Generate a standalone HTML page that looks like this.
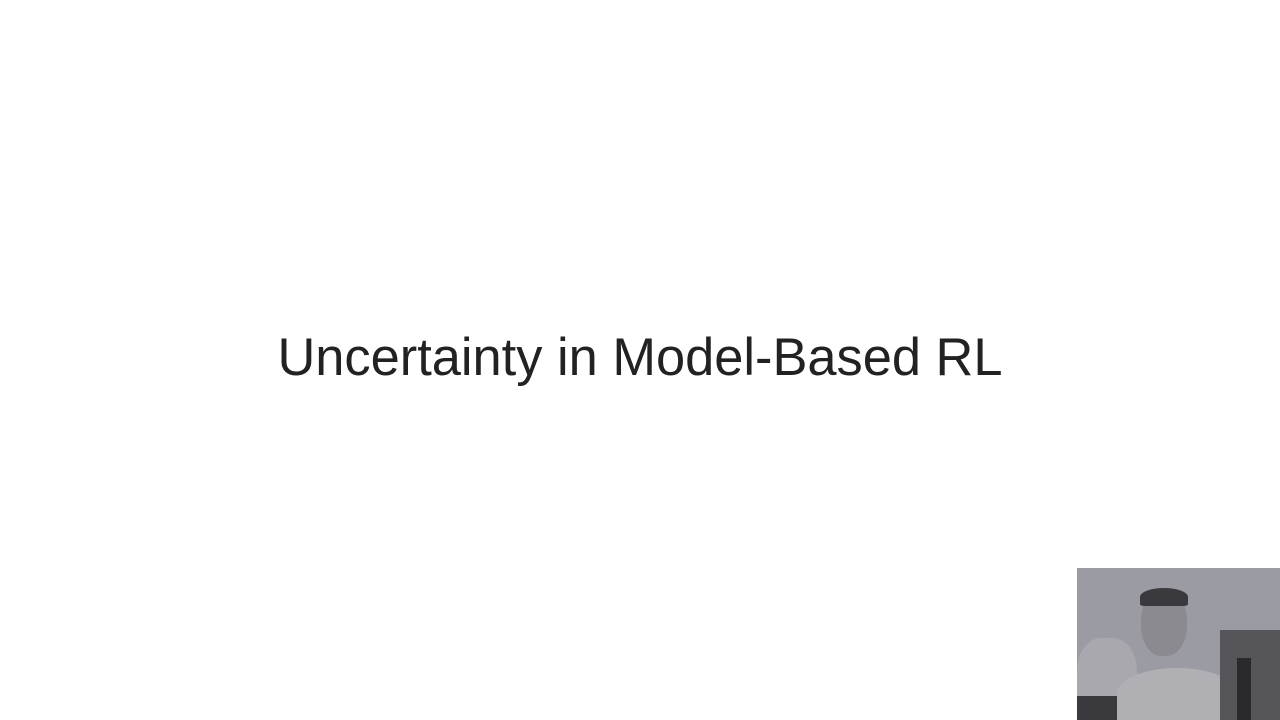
<!DOCTYPE html>
<html><head><style>
html,body{margin:0;padding:0;background:#fff;width:1280px;height:720px;overflow:hidden;position:relative}
.t{position:absolute;left:0;width:1280px;top:323px;text-align:center;font-family:"Liberation Sans",sans-serif;font-size:52.4px;font-weight:300;color:#222;letter-spacing:0;line-height:70px}
.cam{position:absolute;left:1077px;top:568px;width:203px;height:152px;background:#9b9ba3;overflow:hidden}
</style></head><body>
<div class="t">Uncertainty in Model-Based RL</div>
<div class="cam">
<div style="position:absolute;left:0;top:70px;width:60px;height:82px;background:#a8a8ae;border-radius:40% 40% 0 0"></div>
<div style="position:absolute;left:0;top:128px;width:40px;height:24px;background:#3a3a3e"></div>
<div style="position:absolute;left:40px;top:100px;width:120px;height:52px;background:#b0b0b4;border-radius:50% 50% 0 0"></div>
<div style="position:absolute;left:64px;top:22px;width:46px;height:66px;background:#8a8a90;border-radius:45%"></div>
<div style="position:absolute;left:63px;top:20px;width:48px;height:18px;background:#3a3a3e;border-radius:50% 50% 10% 10%"></div>
<div style="position:absolute;left:143px;top:62px;width:60px;height:90px;background:#55555a"></div>
<div style="position:absolute;left:160px;top:90px;width:14px;height:62px;background:#2a2a2e"></div>
</div>
</body></html>
